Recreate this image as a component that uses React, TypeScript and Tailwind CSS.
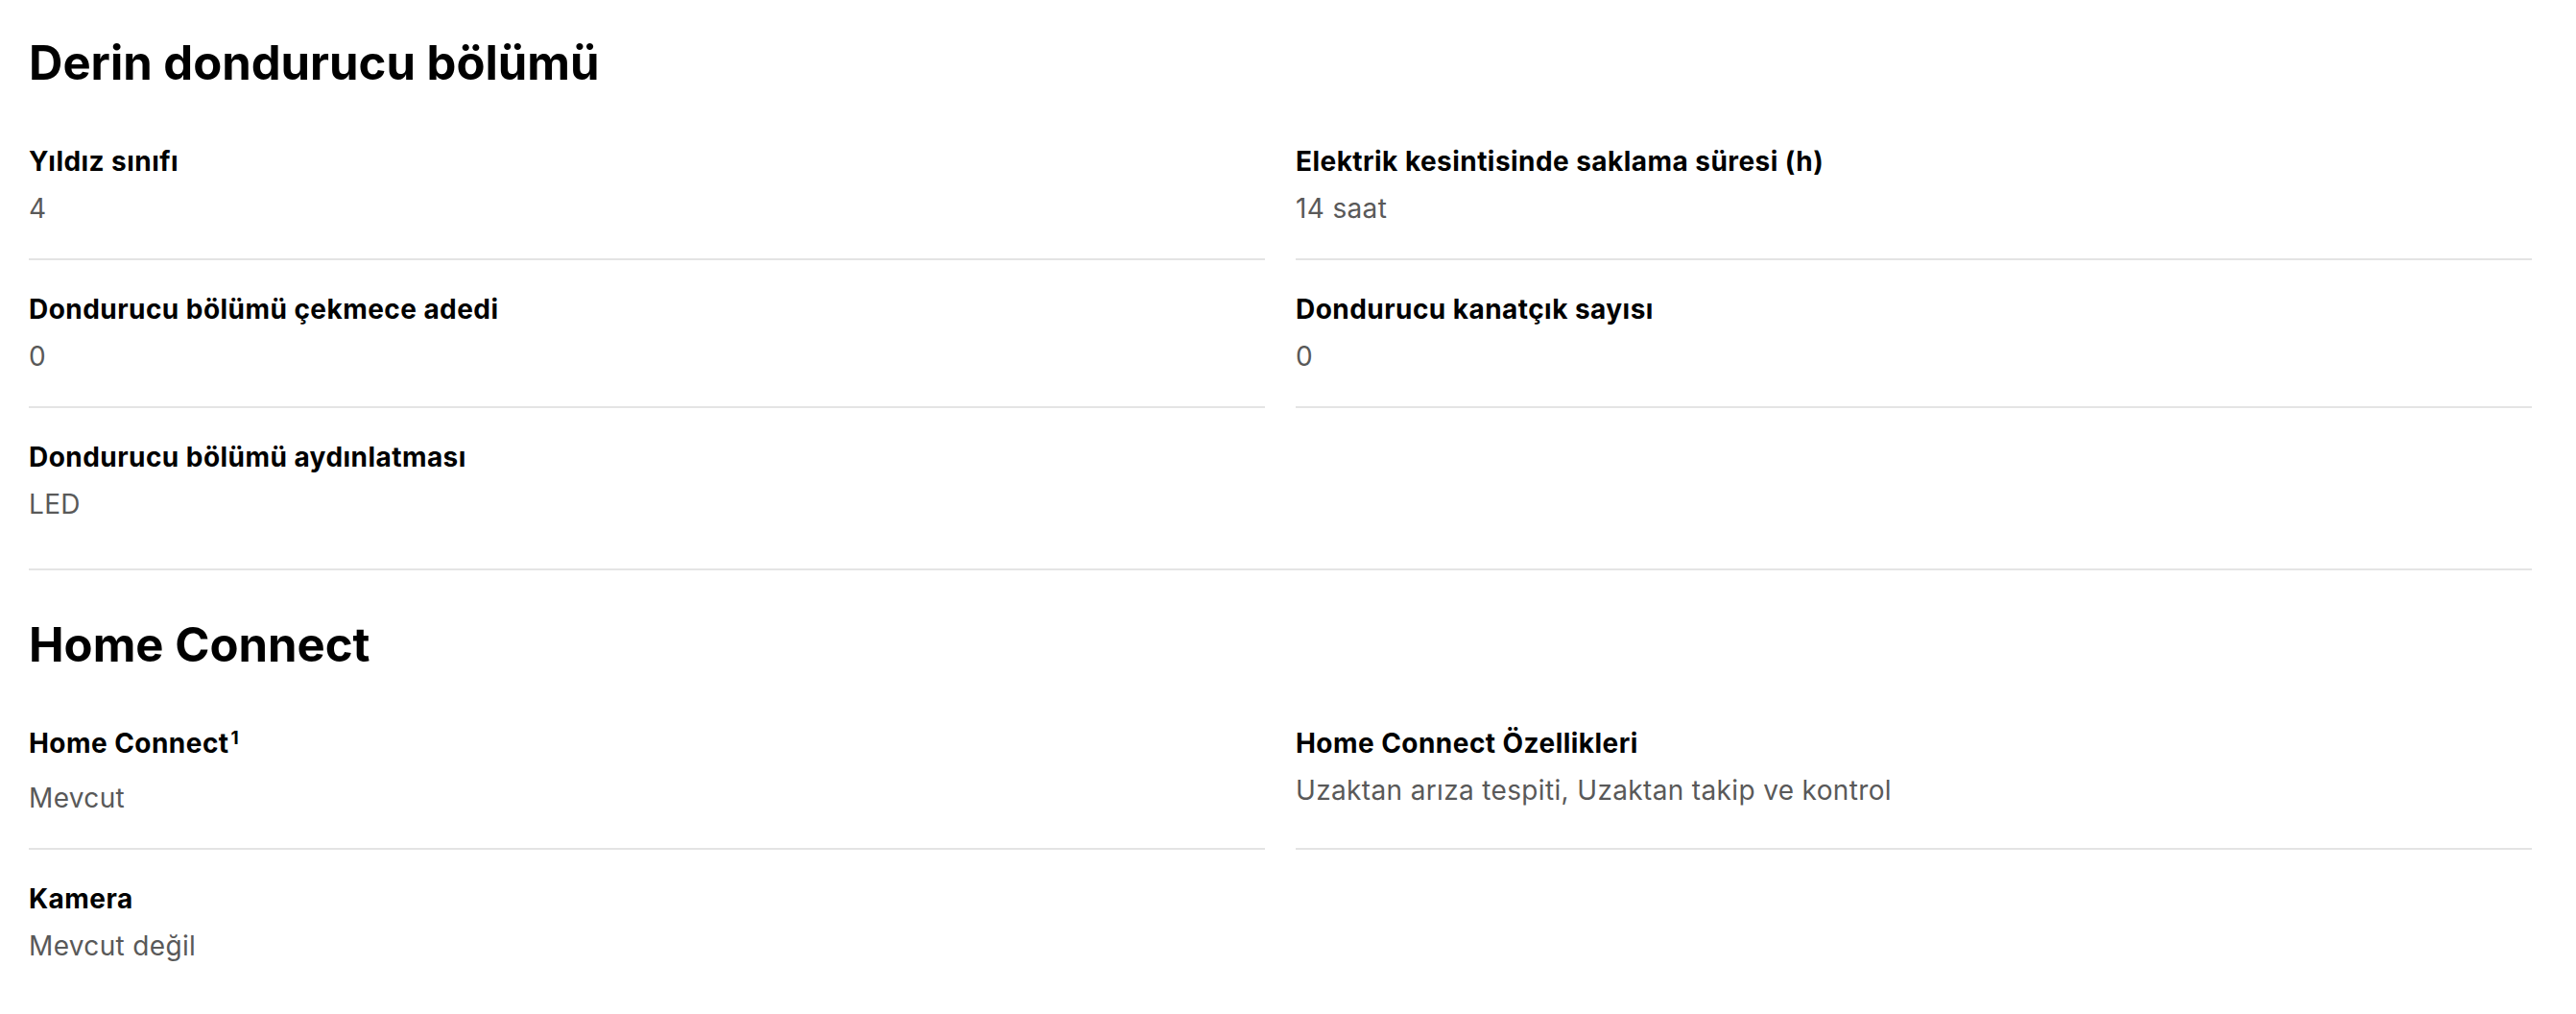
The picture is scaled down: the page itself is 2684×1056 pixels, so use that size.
import React from "react";

type Item = { label: string; value: string; sup?: string; border?: boolean };

const font = { fontFamily: "Inter, 'Noto Sans', 'Liberation Sans', sans-serif" };

function Cell({ item }: { item: Item | null }) {
  if (!item) return <div />;
  return (
    <div
      className={
        item.border
          ? "pt-[33px] pb-[34px] border-b-2 border-[#e4e4e4]"
          : "pt-[33px] pb-[34px]"
      }
    >
      <div className="text-[28px] leading-[36px] font-bold text-black tracking-[0.45px]">
        {item.label}
        {item.sup ? <sup className="text-[19px] font-bold ml-[2px]">{item.sup}</sup> : null}
      </div>
      <div
        className={
          item.sup
            ? "mt-[21px] text-[28px] leading-[36px] text-[#595959] tracking-[0.35px]"
            : "mt-[13px] text-[28px] leading-[36px] text-[#595959] tracking-[0.35px]"
        }
      >
        {item.value}
      </div>
    </div>
  );
}

export default function App() {
  return (
    <div className="bg-white min-h-[1056px] pl-[30px] pr-[46px]" style={font}>
      <section className="pt-[36px] pb-[15px] border-b-2 border-[#e4e4e4]">
        <h2 className="text-[49px] leading-[60px] font-bold text-black mb-[21px]">
          Derin dondurucu bölümü
        </h2>
        <div className="grid grid-cols-2 gap-x-8">
          <Cell item={{ label: "Yıldız sınıfı", value: "4", border: true }} />
          <Cell
            item={{
              label: "Elektrik kesintisinde saklama süresi (h)",
              value: "14 saat",
              border: true,
            }}
          />
          <Cell item={{ label: "Dondurucu bölümü çekmece adedi", value: "0", border: true }} />
          <Cell item={{ label: "Dondurucu kanatçık sayısı", value: "0", border: true }} />
          <Cell item={{ label: "Dondurucu bölümü aydınlatması", value: "LED" }} />
          <Cell item={null} />
        </div>
      </section>
      <section className="pt-[48px]">
        <h2 className="text-[49px] leading-[60px] font-bold text-black mb-[21px]">
          Home Connect
        </h2>
        <div className="grid grid-cols-2 gap-x-8">
          <Cell item={{ label: "Home Connect", sup: "1", value: "Mevcut", border: true }} />
          <Cell
            item={{
              label: "Home Connect Özellikleri",
              value: "Uzaktan arıza tespiti, Uzaktan takip ve kontrol",
              border: true,
            }}
          />
          <Cell item={{ label: "Kamera", value: "Mevcut değil" }} />
          <Cell item={null} />
        </div>
      </section>
    </div>
  );
}
